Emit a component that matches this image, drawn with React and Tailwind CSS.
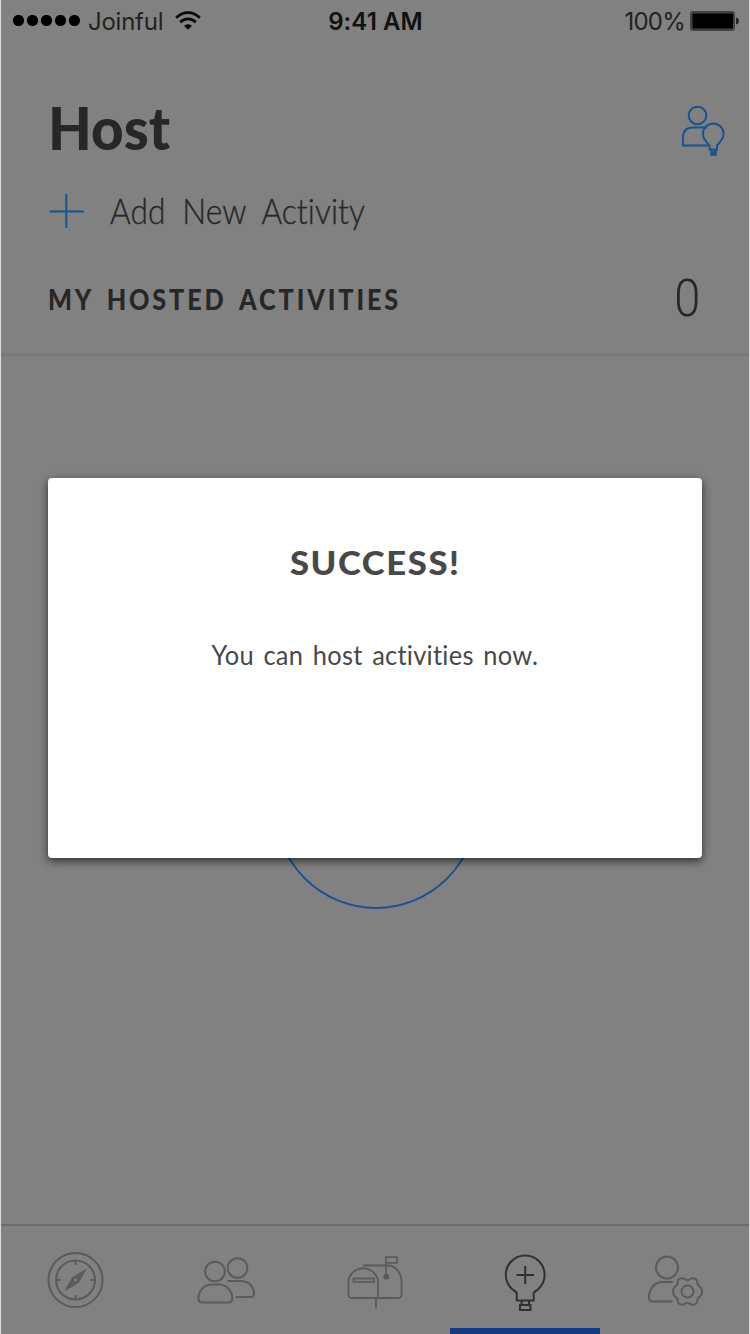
import React from "react";

function StatusBar() {
  return (
    <div className="grid h-[42px] grid-cols-3 items-center pr-[11px] pl-[12px] font-['Inter'] text-[24px] leading-[42px] text-[#111111]">
      <div className="flex items-center">
        <svg width="68" height="12" viewBox="0 0 68 12" fill="#000000">
          <circle cx="6.500" cy="5.500" r="5.600" />
          <circle cx="20.500" cy="5.500" r="5.600" />
          <circle cx="34.500" cy="5.500" r="5.600" />
          <circle cx="48.500" cy="5.500" r="5.600" />
          <circle cx="62.400" cy="5.500" r="5.600" />
        </svg>
        <span className="relative top-px ml-[8px] tracking-[-0.25px] text-[#222222]">Joinful</span>
        <svg className="ml-[12px]" width="26" height="20" viewBox="0 0 26 20" fill="none" stroke="#080808" strokeWidth="2.8">
          <path d="M1.2 6.800C8-.1 18-.1 24.800 6.800" />
          <path d="M5.200 11.200c4.600-4.400 11-4.400 15.600 0" />
          <path d="M9 14.800c2.400-2.200 5.600-2.200 8 0L13 18.800z" fill="#080808" stroke="none" />
        </svg>
      </div>
      <div className="relative top-px text-center font-semibold tracking-[0.1px]">9:41 AM</div>
      <div className="flex items-center justify-end">
        <span className="relative top-px mr-[5px] tracking-[-0.8px] text-[#222222]">100%</span>
        <svg className="-mt-px" width="49" height="20" viewBox="0 0 49 20">
          <rect x="0" y="0" width="45" height="20" rx="3" fill="#434343" />
          <rect x="2.5" y="2.5" width="40.5" height="15" rx="1" fill="#000000" />
          <path d="M46 6.5q3 .5 3 3.5t-3 3.500z" fill="#262626" />
        </svg>
      </div>
    </div>
  );
}

function HostIcon() {
  return (
    <svg className="mt-[8px]" width="44" height="52" viewBox="0 0 44 52" fill="none" stroke="#1c5290" strokeWidth="2">
      <circle cx="16.500" cy="9.500" r="8.800" />
      <path d="M26 21.500H12Q2 21.500 2 31.500v8h25" />
      <path d="M28.500 43.500v-4c-1.500-1.500-2.500-2.500-4-5a10.300 10.300 0 1 1 15.500 0c-1.500 2.500-2.500 3.500-4 5v4z" />
      <path d="M30.500 44v4.500h4V44M29.500 46.500h6" strokeWidth="2.500" />
    </svg>
  );
}

const navIcon = "block";

function CompassIcon() {
  return (
    <svg className={navIcon} width="150" height="102" viewBox="0 0 150 102" fill="none" stroke="#5b5b5b" strokeWidth="2">
      <circle cx="75.500" cy="54" r="27" />
      <circle cx="75.500" cy="54" r="19.500" />
      <path d="M75.500 34v5M75.500 69v5M55.500 54h5M90.500 54h5" />
      <path d="M86 43.500 72.500 51.500 65 64.500 78.500 56.500z" fill="#5b5b5b" strokeWidth="1" />
      <circle cx="75.500" cy="54" r="1.500" fill="#818181" stroke="none" />
    </svg>
  );
}

function PeopleIcon() {
  return (
    <svg className={navIcon} width="150" height="102" viewBox="0 0 150 102" fill="none" stroke="#5b5b5b" strokeWidth="2">
      <circle cx="65" cy="45.500" r="9.800" />
      <circle cx="87.500" cy="42" r="9.800" />
      <path d="M62 58.500h6.500C77 58.500 82.300 65 82.300 72.500q0 4-4 4H52.500q-4 0-4-4C48.500 65 53.500 58.500 62 58.500z" />
      <path d="M78 55h13c8 0 13 6 13 12.500q0 3.500-3.500 3.500H86.500" strokeLinecap="round" />
    </svg>
  );
}

function MailboxIcon() {
  return (
    <svg className={navIcon} width="150" height="102" viewBox="0 0 150 102" fill="none" stroke="#5b5b5b" strokeWidth="1.800">
      <path d="M48.500 68.500V54.500a15 15 0 0 1 29.500 0V72H52q-3.500 0-3.500-3.500z" />
      <path d="M63 39.500h25c8 0 13.500 8 13.500 16v13q0 3.500-3.500 3.500H78" />
      <rect x="53.500" y="52.500" width="20.500" height="3.500" />
      <path d="M76 72v10.500M86 50.500V31.200h11v5.600H86" />
      <circle cx="86.200" cy="50.700" r="2" fill="#5b5b5b" />
    </svg>
  );
}

function BulbIcon() {
  return (
    <svg className={navIcon} width="150" height="102" viewBox="0 0 150 102" fill="none" stroke="#303030" strokeWidth="2">
      <path d="M66.700 74.500V66.800c-1.500-2-3.500-2.500-5-4a19.400 19.400 0 1 1 27 0c-1.500 1.500-3.500 2-5 4v7.700z" />
      <path d="M75.200 40v18M66.500 49h17.500M71.500 75v4M79 75v4M70 79h10.500v5H70z" />
    </svg>
  );
}

function SettingsIcon() {
  return (
    <svg className={navIcon} width="150" height="102" viewBox="0 0 150 102" fill="none" stroke="#5b5b5b" strokeWidth="2">
      <circle cx="67" cy="41.500" r="11" />
      <path d="M72 56h-9c-9 0-14 7.500-14 15.500q0 4 3.500 4H72" strokeLinecap="round" />
      <circle cx="87.500" cy="65.500" r="6" />
      <path d="M87.500 54.200C90 54.200 90 52 93 52.200Q97 52.700 97.200 55.500C97.200 59 98.500 59.800 100 60.500Q102 62 102 65.500Q102 69 100 70.500C98.500 71.200 97.200 72 97.200 75.500Q97 78.300 93 78.800C90 79 90 76.800 87.500 76.800C85 76.800 85 79 82 78.800Q78 78.300 77.800 75.500C77.800 72 76.500 71.200 75 70.500Q73 69 73 65.500Q73 62 75 60.500C76.500 59.800 77.800 59 77.800 55.500Q78 52.700 82 52.200C85 52 85 54.200 87.500 54.200z" />
    </svg>
  );
}

function Tab({ active, children }) {
  return (
    <div className="flex h-full flex-col justify-between overflow-hidden">
      {children}
      {active && <div className="h-[6px] bg-[#173982]" />}
    </div>
  );
}

export default function App() {
  return (
    <div className="relative flex h-[1334px] w-[750px] flex-col overflow-hidden border-x border-[#dedede] bg-[#818181] font-['Lato',sans-serif] text-[#272727]">
      <div className="-mx-px">
        <StatusBar />
      </div>

      <header className="-mx-px flex h-[311px] flex-col pt-[48px]">
        <div className="flex h-[76px] items-center justify-between pr-[25px] pl-[48px]">
          <h1 className="origin-left scale-x-[0.96] text-[59px] leading-[76px] font-black">Host</h1>
          <HostIcon />
        </div>
        <div className="flex h-[88px] items-center pl-[49px]">
          <svg width="36" height="36" viewBox="0 0 36 36" stroke="#1c5290" strokeWidth="2">
            <path d="M.5 19.500h34.500M17.300 2v34" />
          </svg>
          <span className="ml-[25px] origin-left scale-x-[0.88] text-[36px] leading-[88px] font-light tracking-[0.1px] [font-variant-ligatures:none] [word-spacing:9px] [-webkit-text-stroke:0.4px_#272727]">Add New Activity</span>
        </div>
        <div className="flex h-[90px] items-center justify-between pr-[50px] pl-[48px]">
          <h2 className="origin-left scale-x-[0.9] text-[28px] leading-[92px] font-black tracking-[3.200px] [word-spacing:5px]">MY HOSTED ACTIVITIES</h2>
          <span className="origin-right scale-x-[0.92] font-['Roboto'] text-[51px] leading-[90px] font-light">0</span>
        </div>
      </header>
      <div className="h-[3px] shrink-0 bg-[#797979]" />

      <main className="-mx-px flex grow justify-center pt-[350px]">
        <svg width="206" height="206" viewBox="0 0 206 206" fill="none" stroke="#1c5290" strokeWidth="2">
          <circle cx="104" cy="101.500" r="100.500" />
        </svg>
      </main>

      <nav className="-mx-px grid h-[110px] shrink-0 grid-cols-5 border-t-2 border-[#6c6c6c]">
        <Tab><CompassIcon /></Tab>
        <Tab><PeopleIcon /></Tab>
        <Tab><MailboxIcon /></Tab>
        <Tab active><BulbIcon /></Tab>
        <Tab><SettingsIcon /></Tab>
      </nav>

      <div className="absolute top-[478px] left-[47px] flex h-[380px] w-[654px] flex-col items-center rounded-[4px] bg-white pt-[60px] text-[#484848] shadow-[0_3px_8px_rgba(0,0,0,0.65)]">
        <h3 className="scale-x-[1.05] text-[33px] leading-[48px] font-black tracking-[1.500px]">SUCCESS!</h3>
        <p className="mt-[45px] scale-x-[0.94] text-[27px] leading-[48px] tracking-[0.300px] [word-spacing:3px]">You can host activities now.</p>
      </div>
    </div>
  );
}
